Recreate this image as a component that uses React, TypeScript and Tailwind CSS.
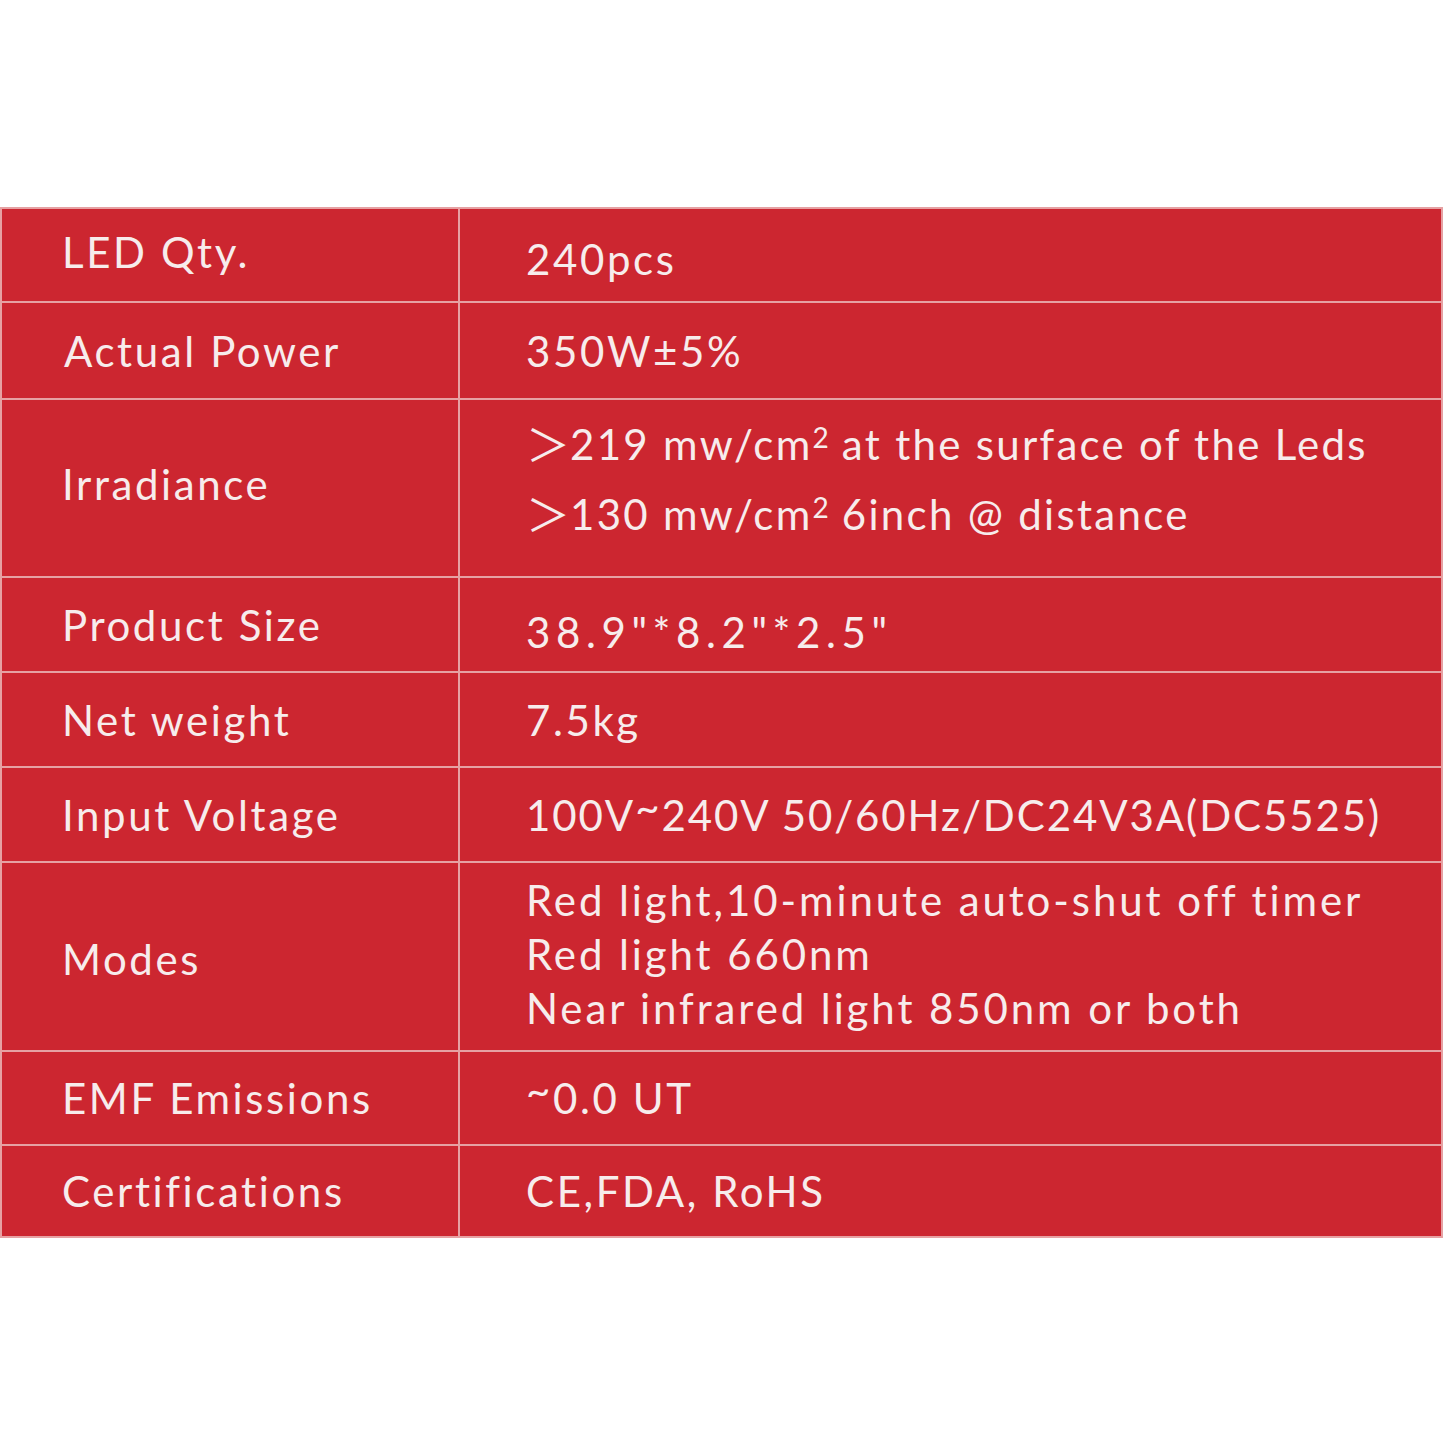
import React from "react";

function Cell({ children, className = "" }: { children: React.ReactNode; className?: string }) {
  return <div className={`flex flex-col justify-center ${className}`}>{children}</div>;
}

function Gt() {
  return (
    <span className="inline-block w-[44px] text-[44px] tracking-normal" style={{ fontFamily: "'Noto Sans CJK SC', 'DejaVu Sans', sans-serif" }}>
      ＞
    </span>
  );
}

function Sq() {
  return <span className="relative -top-[12px] text-[28px] tracking-normal">2</span>;
}

function Tilde() {
  return <span className="relative -top-[8px]">~</span>;
}

const line = "border-[#e6a1a3]";

export default function App() {
  const font = { fontFamily: "Lato, 'Open Sans', sans-serif" };
  return (
    <div className="w-[1445px] h-[1445px] bg-white pt-[207px]" style={font}>
      <div className={`w-[1443px] bg-[#cc2630] border-2 ${line} text-[#f7ecec] text-[42px] tracking-[2.6px] leading-none`}>
        <div className="grid grid-cols-[458px_1fr]">
          <Cell className={`h-[94px] pl-[60px] pb-[6px] border-r-2 border-b-2 ${line}`}>LED Qty.</Cell>
          <Cell className={`h-[94px] pl-[66px] pt-[8px] border-b-2 ${line}`}>240pcs</Cell>

          <Cell className={`h-[97px] pl-[62px] border-r-2 border-b-2 ${line}`}>Actual Power</Cell>
          <Cell className={`h-[97px] pl-[66px] border-b-2 ${line}`}>350W±5%</Cell>

          <Cell className={`h-[178px] pl-[60px] pb-[8px] border-r-2 border-b-2 ${line}`}>Irradiance</Cell>
          <Cell className={`h-[178px] pl-[66px] pb-[20px] gap-[26px] tracking-[2.3px] border-b-2 ${line}`}>
            <div className="flex items-end">
              <Gt />
              <span>219 mw/cm<Sq /> at the surface of the Leds</span>
            </div>
            <div className="flex items-end">
              <Gt />
              <span>130 mw/cm<Sq /> 6inch @ distance</span>
            </div>
          </Cell>

          <Cell className={`h-[95px] pl-[60px] border-r-2 border-b-2 ${line}`}>Product Size</Cell>
          <Cell className={`h-[95px] pl-[66px] pt-[14px] tracking-[5.6px] border-b-2 ${line}`}>38.9"*8.2"*2.5"</Cell>

          <Cell className={`h-[95px] pl-[60px] border-r-2 border-b-2 ${line}`}>Net weight</Cell>
          <Cell className={`h-[95px] pl-[66px] border-b-2 ${line}`}>7.5kg</Cell>

          <Cell className={`h-[95px] pl-[60px] border-r-2 border-b-2 ${line}`}>Input Voltage</Cell>
          <Cell className={`h-[95px] pl-[66px] tracking-[1.9px] border-b-2 ${line}`}>
            <div>100V<Tilde />240V 50/60Hz/DC24V3A(DC5525)</div>
          </Cell>

          <Cell className={`h-[189px] pl-[60px] pt-[4px] border-r-2 border-b-2 ${line}`}>Modes</Cell>
          <Cell className={`h-[189px] pl-[66px] pb-[6px] gap-[12px] tracking-[2.9px] border-b-2 ${line}`}>
            <div>Red light,10-minute auto-shut off timer</div>
            <div>Red light 660nm</div>
            <div>Near infrared light 850nm or both</div>
          </Cell>

          <Cell className={`h-[94px] pl-[60px] border-r-2 border-b-2 ${line}`}>EMF Emissions</Cell>
          <Cell className={`h-[94px] pl-[66px] border-b-2 ${line}`}>
            <div><Tilde />0.0 UT</div>
          </Cell>

          <Cell className={`h-[90px] pl-[60px] border-r-2 ${line}`}>Certifications</Cell>
          <Cell className="h-[90px] pl-[66px]">CE,FDA, RoHS</Cell>
        </div>
      </div>
    </div>
  );
}
